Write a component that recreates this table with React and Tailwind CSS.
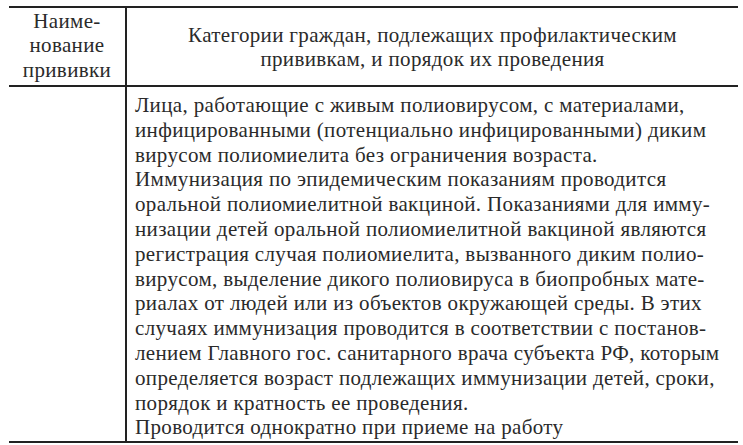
const bodyLines = [
  "Лица, работающие с живым полиовирусом, с материалами,",
  "инфицированными (потенциально инфицированными) диким",
  "вирусом полиомиелита без ограничения возраста.",
  "Иммунизация по эпидемическим показаниям проводится",
  "оральной полиомиелитной вакциной. Показаниями для имму-",
  "низации детей оральной полиомиелитной вакциной являются",
  "регистрация случая полиомиелита, вызванного диким полио-",
  "вирусом, выделение дикого полиовируса в биопробных мате-",
  "риалах от людей или из объектов окружающей среды. В этих",
  "случаях иммунизация проводится в соответствии с постанов-",
  "лением Главного гос. санитарного врача субъекта РФ, которым",
  "определяется возраст подлежащих иммунизации детей, сроки,",
  "порядок и кратность ее проведения.",
  "Проводится однократно при приеме на работу",
];

export default function App() {
  return (
    <div
      className="w-[743px] h-[445px] bg-white text-[#2a2a2a] pt-[6px] pl-[9px] text-[21px] tracking-[0.35px]"
      style={{ fontFamily: '"Liberation Serif", "DejaVu Serif", serif' }}
    >
      <div className="w-[729px] border-t-2 border-b-2 border-[#222]">
        {/* header */}
        <div className="flex border-b-2 border-[#222] h-[79px]">
          <div className="w-[118px] border-r-2 border-[#222] flex flex-col items-center justify-center leading-[24.5px] text-center pb-[2px]">
            <span>Наиме-</span>
            <span>нование</span>
            <span>прививки</span>
          </div>
          <div className="flex-1 flex flex-col items-center justify-center leading-[24px] text-center">
            <span>Категории граждан, подлежащих профилактическим</span>
            <span>прививкам, и порядок их проведения</span>
          </div>
        </div>

        {/* body */}
        <div className="flex h-[354px]">
          <div className="w-[118px] border-r-2 border-[#222]"></div>
          <div className="flex-1 pl-[8px] pt-[6px] leading-[24.8px]">
            {bodyLines.map((line) => (
              <div key={line} className="whitespace-nowrap">{line}</div>
            ))}
          </div>
        </div>
      </div>
    </div>
  );
}
